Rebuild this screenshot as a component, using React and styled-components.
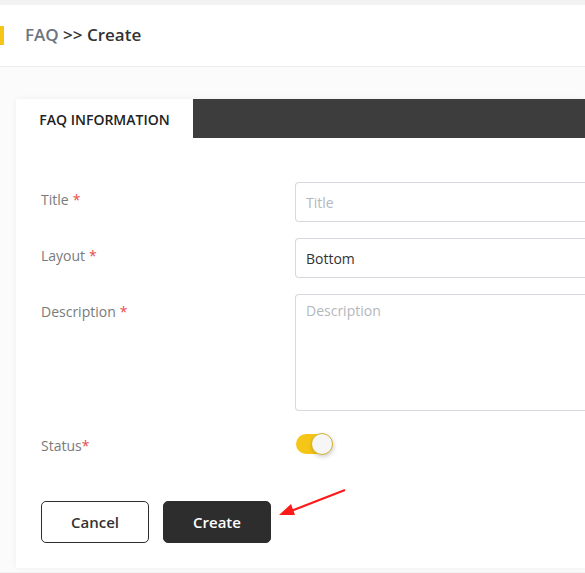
import React from 'react'
import styled, { createGlobalStyle } from 'styled-components'

const GlobalStyle = createGlobalStyle`
  html, body {
    margin: 0;
    padding: 0;
    background: #fafafa;
    font-family: "Open Sans", "Liberation Sans", sans-serif;
    overflow: hidden;
  }
  * { box-sizing: border-box; }
`

const Page = styled.div`
  width: 585px;
  height: 573px;
  padding-top: 5px;
  background: #f2f2f2;
`

const Header = styled.div`
  height: 62px;
  background: #fff;
  border-bottom: 1px solid #ececec;
  display: flex;
  align-items: center;
  position: relative;
  padding-left: 25px;
`

const Accent = styled.span`
  position: absolute;
  left: 0;
  top: 21px;
  width: 4px;
  height: 19px;
  background: #f5c518;
`

const Crumb = styled.h1`
  margin: 0;
  font-size: 17px;
  font-weight: 600;
  color: #333;
  margin-top: -2px;
`

const CrumbRoot = styled.span`
  color: #6c7480;
`

const Body = styled.div`
  background: #fbfbfb;
  padding: 32px 0 5px 16px;
  height: 505px;
`

const Card = styled.div`
  background: #fff;
  box-shadow: 0 0 6px rgba(0, 0, 0, 0.06);
  height: 469px;
`

const TabBar = styled.div`
  display: flex;
  height: 39px;
  background: #3d3d3d;
`

const Tab = styled.div`
  width: 177px;
  background: #fff;
  display: flex;
  align-items: center;
  justify-content: center;
  font-size: 14px;
  font-weight: 600;
  color: #222;
  padding-top: 2px;
`

const Form = styled.div`
  padding: 44px 0 0 25px;
`

const Row = styled.div`
  display: flex;
  margin-bottom: ${p => p.gap ?? 16}px;
`

const Label = styled.label`
  width: 254px;
  flex-shrink: 0;
  font-size: 14px;
  color: #7a7a7a;
  padding-top: ${p => p.top ?? 8}px;
`

const Star = styled.span`
  color: #e74c4c;
  margin-left: ${p => (p.tight ? 0 : 4)}px;
`

const Input = styled.input`
  width: 320px;
  height: 40px;
  border: 1px solid #d6d9de;
  border-right: none;
  border-radius: 4px 0 0 4px;
  padding: 0 10px;
  font-family: inherit;
  font-size: 14px;
  color: #333;
  outline: none;
  &::placeholder { color: #b4b8bd; }
`

const TextArea = styled.textarea`
  width: 320px;
  height: 117px;
  border: 1px solid #d6d9de;
  border-right: none;
  border-radius: 4px 0 0 4px;
  padding: 6px 10px;
  font-family: inherit;
  font-size: 14px;
  resize: none;
  outline: none;
  &::placeholder { color: #b4b8bd; }
`

const Switch = styled.div`
  width: 36px;
  height: 20px;
  margin-top: 2px;
  margin-left: 1px;
  border-radius: 10px;
  background: #f5c518;
  position: relative;
`

const Knob = styled.span`
  position: absolute;
  right: -1px;
  top: -1px;
  width: 22px;
  height: 22px;
  border-radius: 50%;
  background: #f6f6f6;
  border: 1px solid #d6b12a;
  box-shadow: 1px 2px 4px rgba(0, 0, 0, 0.18);
`

const Actions = styled.div`
  display: flex;
  gap: 14px;
  margin-top: 46px;
  position: relative;
`

const Button = styled.button`
  width: 108px;
  height: 42px;
  border-radius: 5px;
  font-family: inherit;
  font-size: 15px;
  font-weight: 600;
  border: 1px solid #2d2d2d;
  background: ${p => (p.dark ? '#2d2d2d' : '#fff')};
  color: ${p => (p.dark ? '#fff' : '#333')};
`

const Arrow = styled.svg`
  position: absolute;
  left: 210px;
  top: -14px;
`

export default function App() {
  return (
    <Page>
      <GlobalStyle />
      <Header>
        <Accent />
        <Crumb>
          <CrumbRoot>FAQ</CrumbRoot> &gt;&gt; Create
        </Crumb>
      </Header>
      <Body>
        <Card>
          <TabBar>
            <Tab>FAQ INFORMATION</Tab>
          </TabBar>
          <Form>
            <Row>
              <Label>Title<Star>*</Star></Label>
              <Input placeholder="Title" />
            </Row>
            <Row>
              <Label>Layout<Star>*</Star></Label>
              <Input defaultValue="Bottom" />
            </Row>
            <Row gap={21}>
              <Label top={8}>Description<Star>*</Star></Label>
              <TextArea placeholder="Description" />
            </Row>
            <Row>
              <Label top={4}>Status<Star tight>*</Star></Label>
              <Switch><Knob /></Switch>
            </Row>
            <Actions>
              <Button>Cancel</Button>
              <Button dark>Create</Button>
              <Arrow width="100" height="40" viewBox="0 0 100 40">
                <line x1="94" y1="3" x2="40" y2="24" stroke="#ff1a1a" strokeWidth="2.2" />
                <polygon points="28,28 40,17 44,28" fill="#ff1a1a" />
              </Arrow>
            </Actions>
          </Form>
        </Card>
      </Body>
    </Page>
  )
}
